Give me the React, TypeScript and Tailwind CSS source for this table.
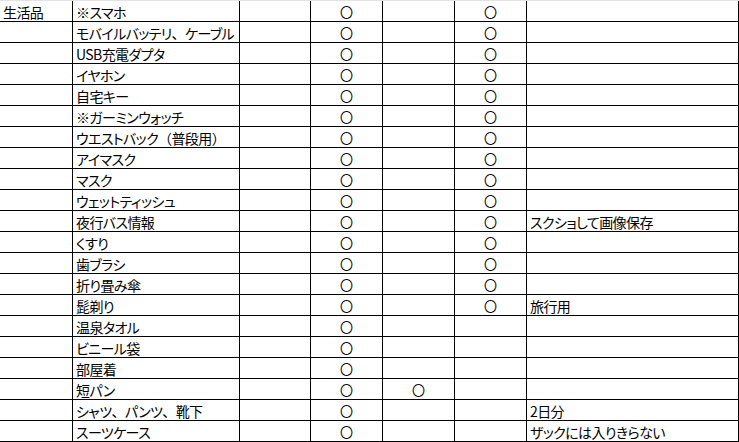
import React from "react";

type Row = { a?: string; b: string; d?: boolean; e?: boolean; f?: boolean; g?: string };

const rows: Row[] = [
  { a: "生活品", b: "※スマホ", d: true, f: true },
  { b: "モバイルバッテリ、ケーブル", d: true, f: true },
  { b: "USB充電ダプタ", d: true, f: true },
  { b: "イヤホン", d: true, f: true },
  { b: "自宅キー", d: true, f: true },
  { b: "※ガーミンウォッチ", d: true, f: true },
  { b: "ウエストバック（普段用）", d: true, f: true },
  { b: "アイマスク", d: true, f: true },
  { b: "マスク", d: true, f: true },
  { b: "ウェットティッシュ", d: true, f: true },
  { b: "夜行バス情報", d: true, f: true, g: "スクショして画像保存" },
  { b: "くすり", d: true, f: true },
  { b: "歯ブラシ", d: true, f: true },
  { b: "折り畳み傘", d: true, f: true },
  { b: "髭剃り", d: true, f: true, g: "旅行用" },
  { b: "温泉タオル", d: true },
  { b: "ビニール袋", d: true },
  { b: "部屋着", d: true },
  { b: "短パン", d: true, e: true },
  { b: "シャツ、パンツ、靴下", d: true, g: "2日分" },
  { b: "スーツケース", d: true, g: "ザックには入りきらない" },
];

const cell = "h-[21px] border-r border-b border-black flex items-center overflow-hidden whitespace-nowrap";
const textCell = cell + " pl-[3px] pt-[2px] tracking-[-0.6px]";
const mark = cell + " justify-center";

function Txt({ s }: { s?: string }) {
  if (!s) return null;
  const parts = s.split(/([、（）])/);
  return (
    <span>
      {parts.map((p, i) =>
        /^[、（）]$/.test(p) ? (
          <span key={i} className="[font-feature-settings:normal]">{p}</span>
        ) : (
          <span key={i}>{p}</span>
        )
      )}
    </span>
  );
}

function Mark({ on }: { on?: boolean }) {
  return <div className={mark}>{on ? <span className="text-[13px] leading-none pt-[1px]">〇</span> : null}</div>;
}

export default function App() {
  return (
    <div
      className="w-[739px] h-[442px] bg-white text-black border-t border-[#e3e3e3] text-[14px] leading-none [font-feature-settings:'palt'] overflow-hidden"
      style={{ fontFamily: '"Noto Sans CJK JP", "Noto Sans", sans-serif' }}
    >
      <div className="grid grid-cols-[73px_167px_71px_72px_72px_72px_212px]">
        {rows.map((r, i) => (
          <React.Fragment key={i}>
            <div className={textCell}><Txt s={r.a} /></div>
            <div className={textCell}><Txt s={r.b} /></div>
            <div className={cell}></div>
            <Mark on={r.d} />
            <Mark on={r.e} />
            <Mark on={r.f} />
            <div className={textCell}><Txt s={r.g} /></div>
          </React.Fragment>
        ))}
      </div>
    </div>
  );
}
